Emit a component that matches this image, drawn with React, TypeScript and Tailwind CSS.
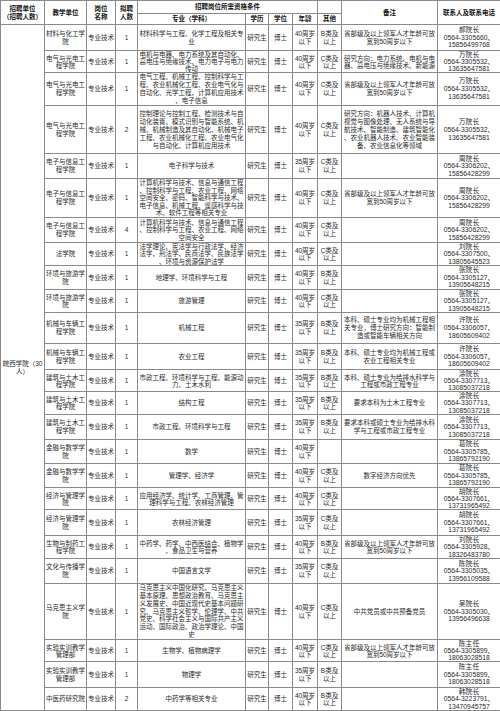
const CONTACT: Record<string, string[]> = {
  hao: ["郝院长", "0564-3305660、", "15856499768"],
  wan: ["万院长", "0564-3305532、", "13635647581"],
  zhou: ["周院长", "0564-3306202、", "15856428299"],
  liuLaw: ["刘院长", "0564-3307500、", "13805645523"],
  zhang: ["张院长", "0564-3305127、", "13905648215"],
  xu: ["许院长", "0564-3306057、", "18605609402"],
  tu: ["涂院长", "0564-3307713、", "13085037218"],
  ge: ["葛院长", "0564-3305785、", "13865792190"],
  hu: ["胡院长", "0564-3307661、", "13731965492"],
  liuBio: ["刘院长", "0564-3305928、", "18326483780"],
  chenWen: ["陈院长", "0564-3305035、", "13956109588"],
  wu: ["吴院长", "0564-3305030、", "13956496638"],
  chenLab: ["陈主任", "0564-3305899、", "18063028518"],
  han: ["韩院长", "0564-3223791、", "13470945757"],
};

const LEADER = ["省部级及以上领军人才年龄可放", "宽到50周岁以下"];

type Row = {
  h: string;
  lead: string;
  unit: string[];
  num: string;
  major: string[];
  age: string[];
  other: string[];
  note: string[];
  contact: string[];
};

const U = {
  cai: ["材料与化工学", "院"],
  dian: ["电气与光电工", "程学院"],
  xin: ["电子与信息工", "程学院"],
  fa: ["法学院"],
  huan: ["环境与旅游学", "院"],
  ji: ["机械与车辆工", "程学院"],
  jian: ["建筑与土木工", "程学院"],
  jin: ["金融与数学学", "院"],
  jing: ["经济与管理学", "院"],
  sheng: ["生物与制药工", "程学院"],
  wen: ["文化与传播学", "院"],
  ma: ["马克思主义学", "院"],
  shi: ["实验实训教学", "管理部"],
  zhong: ["中医药研究院"],
};

const A40 = ["40周岁", "以下"];
const A35 = ["35周岁", "以下"];
const B = ["B类及", "以上"];
const C = ["C类及", "以上"];

const rows: Row[] = [
  { h: "h-[26px]", lead: "leading-[7.8px]", unit: U.cai, num: "1", major: ["材料科学与工程、化学工程及相关专", "业"], age: A40, other: B, note: LEADER, contact: CONTACT.hao },
  { h: "h-[22px]", lead: "leading-[7px]", unit: U.dian, num: "1", major: ["电机与电器、电力系统及其自动化、", "高电压与绝缘技术、电力电子与电力", "传动"], age: A40, other: C, note: ["研究方向：电力系统、电机与电", "器、高电压与绝缘技术、新能源"], contact: CONTACT.wan },
  { h: "h-[33px]", lead: "leading-[7.8px]", unit: U.dian, num: "1", major: ["电气工程、机械工程、控制科学与工", "程、农业机械化工程、农业电气化与", "自动化、光学工程、计算机应用技术", "、电子信息"], age: A40, other: C, note: LEADER, contact: CONTACT.wan },
  { h: "h-[48px]", lead: "leading-[8px]", unit: U.dian, num: "2", major: ["控制理论与控制工程、检测技术与自", "动化装置、模式识别与智能系统、机", "械、机械制造及其自动化、机械电子", "工程、农业机械化工程、农业电气化", "与自动化、计算机应用技术"], age: A40, other: C, note: ["研究方向：机器人技术、计算机", "视觉与图像处理、无人系统与导", "航技术、智能制造、建筑智能化", "、农业机器人技术、农业智能装", "备、农业信息化等领域"], contact: CONTACT.wan },
  { h: "h-[25px]", lead: "leading-[7.6px]", unit: U.xin, num: "1", major: ["电子科学与技术"], age: A35, other: C, note: [], contact: CONTACT.zhou },
  { h: "h-[39px]", lead: "leading-[7.6px]", unit: U.xin, num: "1", major: ["计算机科学与技术、信息与通信工程", "、控制科学与工程、农业工程、网络", "空间安全、密码、智能科学与技术、", "电子信息、机械工程、遥感科学与技", "术、软件工程等相关专业"], age: A40, other: C, note: LEADER, contact: CONTACT.zhou },
  { h: "h-[25px]", lead: "leading-[7.6px]", unit: U.xin, num: "4", major: ["计算机科学与技术、信息与通信工程", "、控制科学与工程、农业工程、网络", "空间安全"], age: A40, other: C, note: [], contact: CONTACT.zhou },
  { h: "h-[23px]", lead: "leading-[7.3px]", unit: U.fa, num: "1", major: ["法学理论、宪法学与行政法学、经济", "法学、刑法学、民商法学、民族法学", "、环境与资源保护法学"], age: A40, other: C, note: [], contact: CONTACT.liuLaw },
  { h: "h-[24px]", lead: "leading-[7.5px]", unit: U.huan, num: "1", major: ["地理学、环境科学与工程"], age: A40, other: B, note: [], contact: CONTACT.zhang },
  { h: "h-[23px]", lead: "leading-[7.3px]", unit: U.huan, num: "1", major: ["旅游管理"], age: A40, other: C, note: [], contact: CONTACT.zhang },
  { h: "h-[31px]", lead: "leading-[8px]", unit: U.ji, num: "1", major: ["机械工程"], age: A35, other: B, note: ["本科、硕士专业均为机械工程相", "关专业，博士研究方向：智能制", "造或智能车辆相关方向"], contact: CONTACT.xu },
  { h: "h-[26px]", lead: "leading-[7.8px]", unit: U.ji, num: "1", major: ["农业工程"], age: A35, other: B, note: ["本科、硕士专业均为机械工程或", "农业工程相关专业"], contact: CONTACT.xu },
  { h: "h-[22px]", lead: "leading-[7px]", unit: U.jian, num: "1", major: ["市政工程、环境科学与工程、能源动", "力、土木水利"], age: A35, other: B, note: ["本科、硕士专业为给排水科学与", "工程或市政工程专业"], contact: CONTACT.tu },
  { h: "h-[23px]", lead: "leading-[7.3px]", unit: U.jian, num: "1", major: ["结构工程"], age: A35, other: B, note: ["要求本科为土木工程专业"], contact: CONTACT.tu },
  { h: "h-[25px]", lead: "leading-[7.6px]", unit: U.jian, num: "1", major: ["市政工程、环境科学与工程"], age: A35, other: B, note: ["要求本科或硕士专业为给排水科", "学与工程或市政工程专业"], contact: CONTACT.tu },
  { h: "h-[24px]", lead: "leading-[7.5px]", unit: U.jin, num: "1", major: ["数学"], age: A40, other: [], note: [], contact: CONTACT.ge },
  { h: "h-[24px]", lead: "leading-[7.5px]", unit: U.jin, num: "1", major: ["管理学、经济学"], age: A40, other: C, note: ["数字经济方向优先"], contact: CONTACT.ge },
  { h: "h-[22px]", lead: "leading-[7px]", unit: U.jing, num: "1", major: ["应用经济学、统计学、工商管理、管", "理科学与工程、农林经济管理"], age: A40, other: C, note: [], contact: CONTACT.hu },
  { h: "h-[26px]", lead: "leading-[7.8px]", unit: U.jing, num: "1", major: ["农林经济管理"], age: A35, other: C, note: [], contact: CONTACT.hu },
  { h: "h-[23px]", lead: "leading-[7.3px]", unit: U.sheng, num: "1", major: ["中药学、药学、中西医结合、植物学", "、食品卫生与营养"], age: A40, other: B, note: LEADER, contact: CONTACT.liuBio },
  { h: "h-[25px]", lead: "leading-[7.6px]", unit: U.wen, num: "1", major: ["中国语言文学"], age: A35, other: C, note: [], contact: CONTACT.chenWen },
  { h: "h-[56px]", lead: "leading-[7.8px]", unit: U.ma, num: "1", major: ["马克思主义中国化研究、马克思主义", "基本原理、思想政治教育、马克思主", "义发展史、中国近现代史基本问题研", "究、马克思主义哲学、伦理学、中共", "党史、科学社会主义与国际共产主义", "运动、国际政治、政治学理论、中国", "史"], age: A40, other: C, note: ["中共党员或中共预备党员"], contact: CONTACT.wu },
  { h: "h-[22px]", lead: "leading-[7px]", unit: U.shi, num: "1", major: ["生物学、植物病理学"], age: A40, other: C, note: LEADER, contact: CONTACT.chenLab },
  { h: "h-[26px]", lead: "leading-[7.8px]", unit: U.shi, num: "1", major: ["物理学"], age: A35, other: B, note: [], contact: CONTACT.chenLab },
  { h: "h-[23px]", lead: "leading-[7.3px]", unit: U.zhong, num: "2", major: ["中药学等相关专业"], age: A40, other: B, note: [], contact: CONTACT.han },
];

const cell = "border border-[#8a8a8a] p-0 text-center align-middle";

function Lines({ lines }: { lines: string[] }) {
  return (
    <>
      {lines.map((l, i) => (
        <div key={i} className="whitespace-nowrap">
          {l}
        </div>
      ))}
    </>
  );
}

export default function App() {
  return (
    <div className="h-[711px] w-[500px] overflow-hidden bg-white font-['Liberation_Sans','Noto_Sans_CJK_SC',sans-serif] text-[6.5px] text-[#2a2a2a]">
      <table className="w-[500px] table-fixed border-collapse border border-[#555]">
        <colgroup>
          <col className="w-[44px]" />
          <col className="w-[42px]" />
          <col className="w-[29px]" />
          <col className="w-[22px]" />
          <col className="w-[108px]" />
          <col className="w-[23px]" />
          <col className="w-[24px]" />
          <col className="w-[25px]" />
          <col className="w-[24px]" />
          <col className="w-[96px]" />
          <col className="w-[63px]" />
        </colgroup>
        <thead className="font-bold leading-[8px] text-[#111]">
          <tr className="h-[13px]">
            <th rowSpan={2} className={cell}>
              <Lines lines={["招聘单位", "（招聘人数）"]} />
            </th>
            <th rowSpan={2} className={cell}>
              教学单位
            </th>
            <th rowSpan={2} className={cell}>
              <Lines lines={["岗位", "名称"]} />
            </th>
            <th rowSpan={2} className={cell}>
              <Lines lines={["拟聘", "人数"]} />
            </th>
            <th colSpan={4} className={cell}>
              招聘岗位所需资格条件
            </th>
            <th className={cell}></th>
            <th rowSpan={2} className={cell}>
              备注
            </th>
            <th rowSpan={2} className={cell}>
              联系人及联系电话
            </th>
          </tr>
          <tr className="h-[11px]">
            <th className={cell}>专业（学科）</th>
            <th className={cell}>学历</th>
            <th className={cell}>学位</th>
            <th className={cell}>年龄</th>
            <th className={cell}>其他</th>
          </tr>
        </thead>
        <tbody>
          {rows.map((r, i) => (
            <tr key={i} className={`${r.h} ${r.lead}`}>
              {i === 0 && (
                <td rowSpan={rows.length} className={`${cell} leading-[8px]`}>
                  皖西学院（30人）
                </td>
              )}
              <td className={cell}>
                <Lines lines={r.unit} />
              </td>
              <td className={cell}>专业技术</td>
              <td className={cell}>{r.num}</td>
              <td className={cell}>
                <Lines lines={r.major} />
              </td>
              <td className={cell}>研究生</td>
              <td className={cell}>博士</td>
              <td className={cell}>
                <Lines lines={r.age} />
              </td>
              <td className={cell}>
                <Lines lines={r.other} />
              </td>
              <td className={cell}>
                <Lines lines={r.note} />
              </td>
              <td className={`${cell} text-[6.8px]`}>
                <Lines lines={r.contact} />
              </td>
            </tr>
          ))}
        </tbody>
      </table>
    </div>
  );
}
